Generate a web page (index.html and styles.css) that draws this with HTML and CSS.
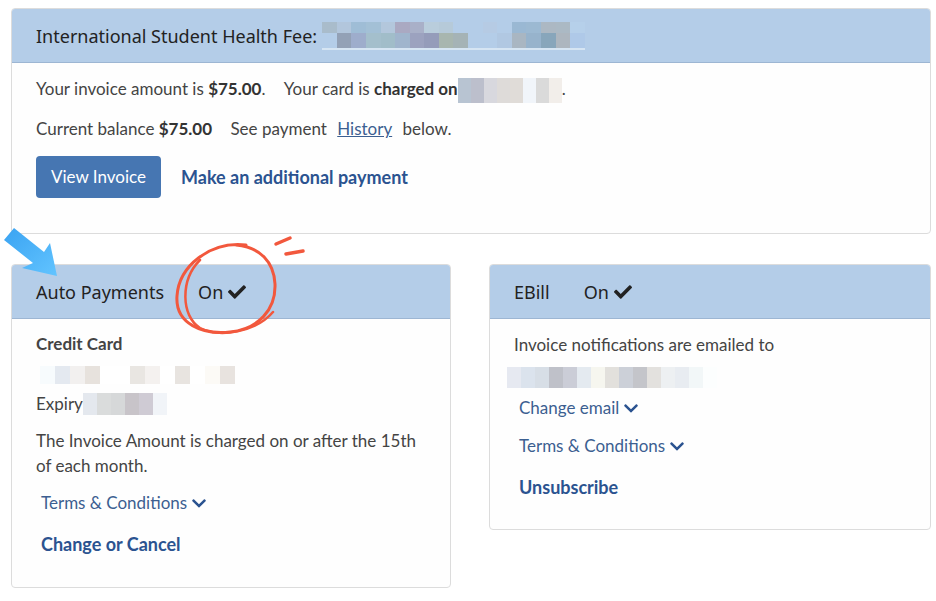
FILE: index.html
```html
<!DOCTYPE html>
<html lang="en">

<head>
    <meta charset="UTF-8">
    <meta name="viewport" content="width=device-width, initial-scale=1.0">
    <title>Student Health Fee</title>
    <link rel="stylesheet" href="styles.css">
</head>

<body>
    <div id="page">
        <div class="panel" id="fee">
            <div class="panel-head">
                <span class="title">International Student Health Fee:</span>
                <span class="blur blur-title">
                    <i style="background:#a9bccb"></i><i style="background:#b2c6dc"></i><i style="background:#9fbdd6"></i><i style="background:#a3c0d6"></i><i style="background:#b3c7dc"></i><i style="background:#aaa9c2"></i><i style="background:#a9b0c8"></i><i style="background:#b9cddc"></i><i style="background:#b6cad9"></i><i style="background:#b4cde8"></i><i style="background:#b4cde8"></i><i style="background:#b6cbe4"></i><i style="background:#b4cde8"></i><i style="background:#9ab8d3"></i><i style="background:#9cb9d2"></i><i style="background:#acb8c3"></i><i style="background:#abb9c4"></i><i style="background:#b6d0ea"></i>
                    <i style="background:#b4cde8"></i><i style="background:#93a1b6"></i><i style="background:#9eadcc"></i><i style="background:#a4bfcc"></i><i style="background:#a1bdc9"></i><i style="background:#a0b5cd"></i><i style="background:#9ca2bf"></i><i style="background:#959cba"></i><i style="background:#a8b6af"></i><i style="background:#a5b3b6"></i><i style="background:#b4cde8"></i><i style="background:#b4cde8"></i><i style="background:#b1c8e2"></i><i style="background:#a9b6c2"></i><i style="background:#97b3cc"></i><i style="background:#88a6bb"></i><i style="background:#adb6bf"></i><i style="background:#afc9e8"></i>
                </span>
            </div>
            <div class="panel-body">
                <p>Your invoice amount is <b>$75.00</b>. <span class="sp">Your card is <b>charged on</b></span><span class="blur blur-date"><i style="background:#b8c4d2"></i><i style="background:#bcbfcc"></i><i style="background:#d8d8de"></i><i style="background:#dedbd9"></i><i style="background:#e0dcd8"></i><i style="background:#f1f5fa"></i><i style="background:#dadada"></i><i style="background:#f2eeea"></i></span>.</p>
                <p>Current balance <b>$75.00</b> <span class="sp">See payment <a class="history" href="#">History</a> below.</span></p>
                <div class="actions">
                    <a class="btn" href="#">View Invoice</a>
                    <a class="link strong" href="#">Make an additional payment</a>
                </div>
            </div>
        </div>

        <div id="row">
            <div class="panel" id="auto">
                <div class="panel-head">
                    <span class="title">Auto Payments</span>
                    <span class="state">On
                        <svg class="check" viewBox="0 0 512 512"><path d="M173.9 439.4l-166.4-166.4c-10-10-10-26.2 0-36.2l36.2-36.2c10-10 26.2-10 36.2 0L192 312.7 432.1 72.6c10-10 26.2-10 36.2 0l36.2 36.2c10 10 10 26.2 0 36.2L210.1 439.4c-10 10-26.2 10-36.2 0z"/></svg>
                    </span>
                </div>
                <div class="panel-body">
                    <p class="label">Credit Card</p>
                    <div class="blur blur-card">
                        <i style="background:#f7fbfd"></i><i style="background:#e4e9f0"></i><i style="background:#f2f0ef"></i><i style="background:#e7e2dd"></i><i style="background:#fff"></i><i style="background:#fff"></i><i style="background:#e9e6e2"></i><i style="background:#f4f1ef"></i><i style="background:#fff"></i><i style="background:#e8e4e0"></i><i style="background:#fff"></i><i style="background:#fcfaf6"></i><i style="background:#e8e3df"></i>
                    </div>
                    <p class="expiry">Expiry<span class="blur blur-exp"><i style="background:#e4e8ee"></i><i style="background:#dadcdc"></i><i style="background:#d6d8d9"></i><i style="background:#c8c4c9"></i><i style="background:#cfcbd4"></i><i style="background:#f1f4f8"></i></span></p>
                    <p class="note">The Invoice Amount is charged on or after the 15th of each month.</p>
                    <a class="link drop" href="#">Terms &amp; Conditions
                        <svg class="chev" viewBox="0 0 448 512"><path d="M207.3 392.3L12.7 197.7c-9.4-9.4-9.4-24.6 0-33.9l22.7-22.7c9.4-9.4 24.5-9.4 33.9 0L224 295.1l154.7-154c9.4-9.3 24.5-9.3 33.9 0l22.7 22.7c9.4 9.4 9.4 24.6 0 33.9L240.7 392.3c-9.4 9.4-24.6 9.4-33.4 0z"/></svg>
                    </a>
                    <a class="link strong last" href="#">Change or Cancel</a>
                </div>
            </div>

            <div class="panel" id="ebill">
                <div class="panel-head">
                    <span class="title">EBill</span>
                    <span class="state">On
                        <svg class="check" viewBox="0 0 512 512"><path d="M173.9 439.4l-166.4-166.4c-10-10-10-26.2 0-36.2l36.2-36.2c10-10 26.2-10 36.2 0L192 312.7 432.1 72.6c10-10 26.2-10 36.2 0l36.2 36.2c10 10 10 26.2 0 36.2L210.1 439.4c-10 10-26.2 10-36.2 0z"/></svg>
                    </span>
                </div>
                <div class="panel-body">
                    <p class="label-plain">Invoice notifications are emailed to</p>
                    <div class="blur blur-mail">
                        <i style="background:#e6e9f1"></i><i style="background:#dbe3ed"></i><i style="background:#d7dee6"></i><i style="background:#bfc1c9"></i><i style="background:#cbcdd7"></i><i style="background:#e4eaf0"></i><i style="background:#f6f6ef"></i><i style="background:#e2e0dc"></i><i style="background:#ccd0d8"></i><i style="background:#c4c5ca"></i><i style="background:#e3e1de"></i><i style="background:#edf0f2"></i><i style="background:#e8ecf1"></i><i style="background:#f2f7f8"></i><i style="background:#fcfefe"></i>
                    </div>
                    <a class="link drop first" href="#">Change email
                        <svg class="chev" viewBox="0 0 448 512"><path d="M207.3 392.3L12.7 197.7c-9.4-9.4-9.4-24.6 0-33.9l22.7-22.7c9.4-9.4 24.5-9.4 33.9 0L224 295.1l154.7-154c9.4-9.3 24.5-9.3 33.9 0l22.7 22.7c9.4 9.4 9.4 24.6 0 33.9L240.7 392.3c-9.4 9.4-24.6 9.4-33.4 0z"/></svg>
                    </a>
                    <a class="link drop" href="#">Terms &amp; Conditions
                        <svg class="chev" viewBox="0 0 448 512"><path d="M207.3 392.3L12.7 197.7c-9.4-9.4-9.4-24.6 0-33.9l22.7-22.7c9.4-9.4 24.5-9.4 33.9 0L224 295.1l154.7-154c9.4-9.3 24.5-9.3 33.9 0l22.7 22.7c9.4 9.4 9.4 24.6 0 33.9L240.7 392.3c-9.4 9.4-24.6 9.4-33.4 0z"/></svg>
                    </a>
                    <a class="link strong last" href="#">Unsubscribe</a>
                </div>
            </div>
        </div>

        <!-- annotations drawn over the screenshot -->
        <svg class="arrow" viewBox="0 0 60 52">
            <defs>
                <linearGradient id="ag" x1="0" y1="0" x2="1" y2="1">
                    <stop offset="0" stop-color="#3aa3f2"/>
                    <stop offset="1" stop-color="#62c4ff"/>
                </linearGradient>
            </defs>
            <polygon points="2,14 12,2 42,26 48,17 55,50 20,42 31,37" fill="url(#ag)"/>
        </svg>
        <svg class="circle" viewBox="0 0 140 110">
            <path d="M78 13 C42 9 11 34 9 64 C7 92 35 103 62 100 C90 97 108 78 107 52 C106 30 92 15 68 13" fill="none" stroke="#f2583d" stroke-width="3" stroke-linecap="round"/>
            <path d="M32 28 C12 48 13 84 32 96 C52 106 88 100 105 80" fill="none" stroke="#f2583d" stroke-width="2.5" stroke-linecap="round"/>
            <path d="M108 12 L122 6" stroke="#f2583d" stroke-width="3.5" stroke-linecap="round"/>
            <path d="M118 22 L135 19" stroke="#f2583d" stroke-width="3.5" stroke-linecap="round"/>
        </svg>
    </div>
</body>

</html>
```

FILE: styles.css
```css
* {
    box-sizing: border-box;
}

body {
    margin: 0;
    background-color: #fff;
    font-family: Lato, "Open Sans", sans-serif;
    font-size: 17px;
    line-height: 24px;
    color: #444;
}

#page {
    position: relative;
    width: 936px;
    height: 601px;
    padding: 8px 5px 0 11px;
}

.panel {
    background-color: #fefefe;
    border: 1px solid #dcdcdc;
    border-radius: 4px;
    overflow: hidden;
}

.panel-head {
    display: flex;
    align-items: center;
    height: 54px;
    padding: 0 24px;
    background-color: #b4cde8;
    border-bottom: 1px solid #9db6d3;
    font-family: "Noto Sans", sans-serif;
    font-size: 18px;
    color: #222;
}

.panel-body {
    padding: 13px 24px 0 24px;
}

p {
    margin: 0;
}

b {
    color: #333;
}

.sp {
    margin-left: 14px;
}

/* pixelated redactions */
.blur {
    display: inline-grid;
    grid-auto-flow: column;
    grid-template-rows: 1fr;
    vertical-align: middle;
}

.blur i {
    display: block;
}

.blur-title {
    grid-template-rows: 11px 15px;
    grid-template-columns: repeat(18, 14.6px);
    margin-left: 5px;
    border-bottom: 2px solid #d6e5f3;
    grid-auto-flow: row;
}

.blur-date {
    grid-template-columns: repeat(8, 13px);
    height: 25px;
    margin: -4px 0;
}

.blur-card {
    display: grid;
    grid-template-columns: repeat(13, 15px);
    height: 18px;
    margin: 10px 0 0 4px;
}

.blur-exp {
    grid-template-columns: repeat(6, 14px);
    height: 22px;
}

.blur-mail {
    display: grid;
    grid-template-columns: repeat(15, 14px);
    height: 21px;
    margin: 10px 0 0 -7px;
}

#fee {
    height: 226px;
}

#fee .panel-body {
    padding-top: 14px;
}

#fee p {
    height: 24px;
    margin-bottom: 16px;
}

.actions {
    display: flex;
    align-items: center;
    gap: 20px;
    margin-top: -1px;
}

.btn {
    display: inline-block;
    padding: 9px 15px;
    background-color: #4676b2;
    color: #fff;
    border-radius: 4px;
    text-decoration: none;
}

a.link {
    color: #3c5f91;
    text-decoration: none;
}

a.strong {
    color: #2b5390;
    font-weight: bold;
    font-size: 18px;
}

.history {
    color: #3c5f91;
    margin: 0 6px;
}

#row {
    display: flex;
    align-items: flex-start;
    gap: 38px;
    margin-top: 30px;
}

#auto {
    width: 440px;
    height: 324px;
}

#ebill {
    width: 442px;
    height: 266px;
}

.state {
    display: flex;
    align-items: center;
    gap: 5px;
    margin-left: 34px;
}

#ebill .state {
    margin-left: 34px;
}

.check {
    width: 18px;
    height: 18px;
    fill: #222;
}

.label {
    font-weight: bold;
    color: #444;
}

.expiry {
    margin-top: 8px;
    display: flex;
    align-items: center;
}

.note {
    margin-top: 12px;
    line-height: 25px;
}

.drop {
    display: flex;
    align-items: center;
    gap: 4px;
    margin-left: 5px;
    margin-top: 13px;
}

#ebill .drop {
    margin-top: 14px;
}

#ebill .drop.first {
    margin-top: 8px;
}

.chev {
    width: 16px;
    height: 16px;
    fill: #2b5390;
}

.last {
    display: block;
    margin: 17px 0 0 5px;
}

.label-plain {
    margin-top: 1px;
}

.arrow {
    position: absolute;
    left: 2px;
    top: 226px;
    width: 60px;
    height: 52px;
}

.circle {
    position: absolute;
    left: 168px;
    top: 232px;
    width: 140px;
    height: 110px;
}
```
